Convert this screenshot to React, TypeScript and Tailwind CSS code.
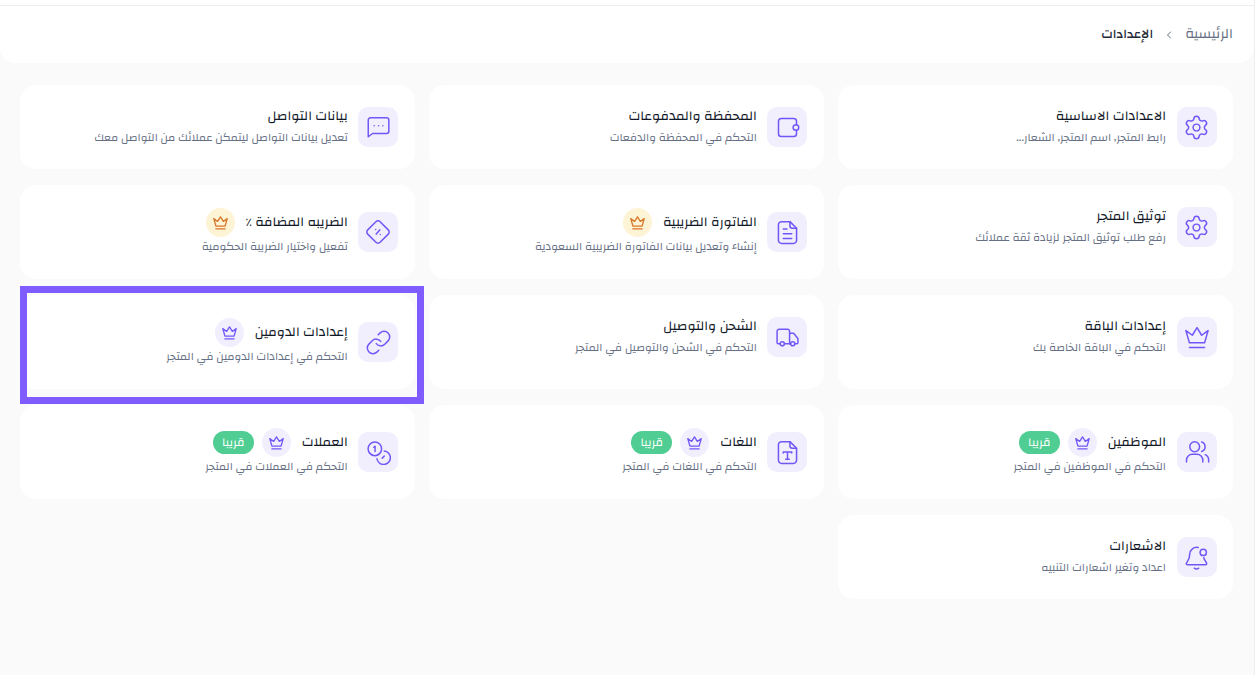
import React from "react";
import { Settings, Link as LinkIcon, Truck } from "lucide-react";

const P = "#7257f7";

function Svg({ children, size = 24 }: { children: React.ReactNode; size?: number }) {
  return (
    <svg width={size} height={size} viewBox="0 0 24 24" fill="none" stroke={P} strokeWidth={(1.5 * 24) / size} strokeLinecap="round" strokeLinejoin="round">
      {children}
    </svg>
  );
}

function Crown({ color = P, size = 16, sw = 1.3 }: { color?: string; size?: number; sw?: number }) {
  return (
    <svg width={size} height={size} viewBox="0 0 24 24" fill="none" stroke={color} strokeWidth={(sw * 24) / size} strokeLinecap="round" strokeLinejoin="round">
      <path d="M5.500 17 2.500 6.500l5.500 4L12 4l4 6.500 5.500-4L18.500 17z" />
      <path d="M5.500 21h13" />
    </svg>
  );
}

const icons: Record<string, React.ReactNode> = {
  gear: <Settings size={27} color={P} strokeWidth={1.33} />,
  wallet: (
    <Svg size={27}>
      <path d="M20 9.500V6.500A2.500 2.500 0 0 0 17.500 4h-11A2.500 2.500 0 0 0 4 6.500v11A2.500 2.500 0 0 0 6.500 20h11a2.500 2.500 0 0 0 2.500-2.500v-3" />
      <rect x="17" y="9.500" width="5" height="5" rx="2.500" />
    </Svg>
  ),
  chat: (
    <Svg size={26}>
      <path d="M3 21V5.500A2 2 0 0 1 5 3.500h15a2 2 0 0 1 2 2V16a2 2 0 0 1-2 2H7z" />
      <path d="M8.500 10.800h.01M12.500 10.800h.01M16.500 10.800h.01" />
    </Svg>
  ),
  doc: (
    <Svg size={29}>
      <path d="M14 3H7a2.500 2.500 0 0 0-2.500 2.500v13A2.500 2.500 0 0 0 7 21h10a2.500 2.500 0 0 0 2.500-2.500V8.500z" />
      <path d="M14 3v3.500a2 2 0 0 0 2 2h3.500M8.500 9h3M8.500 13h7M8.500 17h7" />
    </Svg>
  ),
  percent: (
    <Svg size={28}>
      <path d="M10.200 3.200a2.500 2.500 0 0 1 3.600 0l7 7a2.500 2.500 0 0 1 0 3.600l-7 7a2.500 2.500 0 0 1-3.600 0l-7-7a2.500 2.500 0 0 1 0-3.600z" />
      <path d="m13.500 10.200-3 3.600M10 9.800h.01M14 14.200h.01" />
    </Svg>
  ),
  link: <LinkIcon size={27} color={P} strokeWidth={1.33} />,
  truck: <Truck size={25} color={P} strokeWidth={1.44} />,
  fileT: (
    <Svg size={29}>
      <path d="M14 3H7a2.500 2.500 0 0 0-2.500 2.500v13A2.500 2.500 0 0 0 7 21h10a2.500 2.500 0 0 0 2.500-2.500V8.500z" />
      <path d="M14 3v3.500a2 2 0 0 0 2 2h3.500M8.500 12.500v-1h7v1M12 11.500v6M10.500 17.500h3" />
    </Svg>
  ),
  crown: <Crown size={28} sw={1.5} />,
  users: (
    <Svg size={28}>
      <circle cx="10" cy="7.500" r="4.200" />
      <path d="M3 20.500v-1.500a5 5 0 0 1 5-5h4a5 5 0 0 1 5 5v1.500" />
      <path d="M16 3.500a4.200 4.200 0 0 1 0 8M19 14.300a5 5 0 0 1 3 4.700v1.500" />
    </Svg>
  ),
  bell: (
    <Svg size={27}>
      <path d="M13.500 3.200A6 6 0 0 0 6 9c0 5-2.500 6.500-3 8.200-.2.600.200 1.300 1 1.300h16c.8 0 1.200-.7 1-1.300-.6-1.700-2-2.700-2.500-5" />
      <circle cx="18" cy="7.500" r="2.800" />
      <path d="M10 21.500c1.200.8 2.800.8 4 0" />
    </Svg>
  ),
  coins: (
    <Svg size={25}>
      <circle cx="8.500" cy="8.500" r="6.500" />
      <path d="M7.500 7l1.200-1v5" />
      <path d="M17.500 10.500a6.500 6.500 0 1 1-7 7.500" />
      <path d="M15.500 17.500l2-2" />
    </Svg>
  ),
};

type CardT = { icon: string; title: string; sub: string; crown?: "amber" | "purple"; soon?: boolean; hl?: boolean; pct?: boolean };

const cards: CardT[] = [
  { icon: "gear", title: "الاعدادات الاساسية", sub: "رابط المتجر, اسم المتجر, الشعار..." },
  { icon: "wallet", title: "المحفظة والمدفوعات", sub: "التحكم في المحفظة والدفعات" },
  { icon: "chat", title: "بيانات التواصل", sub: "تعديل بيانات التواصل ليتمكن عملائك من التواصل معك" },
  { icon: "gear", title: "توثيق المتجر", sub: "رفع طلب توثيق المتجر لزيادة ثقة عملائك" },
  { icon: "doc", title: "الفاتورة الضريبية", sub: "إنشاء وتعديل بيانات الفاتورة الضريبية السعودية", crown: "amber" },
  { icon: "percent", title: "الضريبه المضافة ", pct: true, sub: "تفعيل واختيار الضريبة الحكومية", crown: "amber" },
  { icon: "crown", title: "إعدادات الباقة", sub: "التحكم في الباقة الخاصة بك" },
  { icon: "truck", title: "الشحن والتوصيل", sub: "التحكم في الشحن والتوصيل في المتجر" },
  { icon: "link", title: "إعدادات الدومين", sub: "التحكم في إعدادات الدومين في المتجر", crown: "purple", hl: true },
  { icon: "users", title: "الموظفين", sub: "التحكم في الموظفين في المتجر", crown: "purple", soon: true },
  { icon: "fileT", title: "اللغات", sub: "التحكم في اللغات في المتجر", crown: "purple", soon: true },
  { icon: "coins", title: "العملات", sub: "التحكم في العملات في المتجر", crown: "purple", soon: true },
  { icon: "bell", title: "الاشعارات", sub: "اعداد وتغير اشعارات التنبيه" },
];

function Card({ c }: { c: CardT }) {
  return (
    <div className="relative rounded-[16px] bg-white py-[22px] pl-[17px] pr-[16.5px]">
      {c.hl && <div className="absolute top-[-9px] bottom-[-15px] left-0 right-[-9px] border-[7px] border-[#7f5cff]" />}
      <div className="flex items-center gap-[10.5px]">
        <div className="flex h-10 w-10 shrink-0 items-center justify-center rounded-[10px] bg-[#f1eefe]">{icons[c.icon]}</div>
        <div className="flex min-w-0 flex-col">
          <div className="flex items-center gap-[8px]">
            <h3 className="text-[13.5px] font-normal leading-[18px] text-[#111827]">
              {c.title}
              {c.pct && <span className="font-['DejaVu_Sans'] text-[12px]">٪</span>}
            </h3>
            {c.crown && (
              <span className={c.crown === "amber" ? "my-[0.5px] mr-[3px] flex h-[29px] w-[29px] items-center justify-center rounded-full bg-[#fdf3d5]" : "my-[0.5px] mr-[3px] flex h-[29px] w-[29px] items-center justify-center rounded-full bg-[#f1eefe]"}>
                <Crown color={c.crown === "amber" ? "#d9772a" : P} size={17} />
              </span>
            )}
            {c.soon && <span className="flex h-[23px] w-[41px] items-center justify-center rounded-full bg-[#50cd92] text-[12px] leading-none text-white">قريبا</span>}
          </div>
          <p className={c.crown ? "mt-[1px] pb-[1px] text-[11.2px] leading-[18px] text-[#667085]" : "mt-[4px] text-[11.2px] leading-[18px] text-[#667085]"}>{c.sub}</p>
        </div>
      </div>
    </div>
  );
}

export default function App() {
  return (
    <div className="flex min-h-[675px] bg-white font-['Changa','DejaVu_Sans',sans-serif]">
      <div dir="rtl" className="w-[1255px] shrink-0 border-r border-[#eeeeee] bg-[#fafafa]">
        <div className="h-[5px] bg-white" />
        <header className="flex h-[58px] items-center gap-[10px] rounded-b-[16px] border-t border-[#eeeeee] bg-white px-[21px]">
          <span className="text-[14px] text-[#667085]">الرئيسية</span>
          <svg width="12" height="12" viewBox="0 0 24 24" fill="none" stroke="#667085" strokeWidth="2" strokeLinecap="round" strokeLinejoin="round"><path d="m15 6-6 6 6 6" /></svg>
          <span className="text-[13px] font-medium text-[#1f2937]">الإعدادات</span>
        </header>
        <main className="grid grid-cols-3 gap-x-[14.4px] gap-y-[16px] pb-[75px] pl-[20px] pr-[21px] pt-[22px]">
          {cards.map((c, i) => <Card key={i} c={c} />)}
        </main>
      </div>
    </div>
  );
}
